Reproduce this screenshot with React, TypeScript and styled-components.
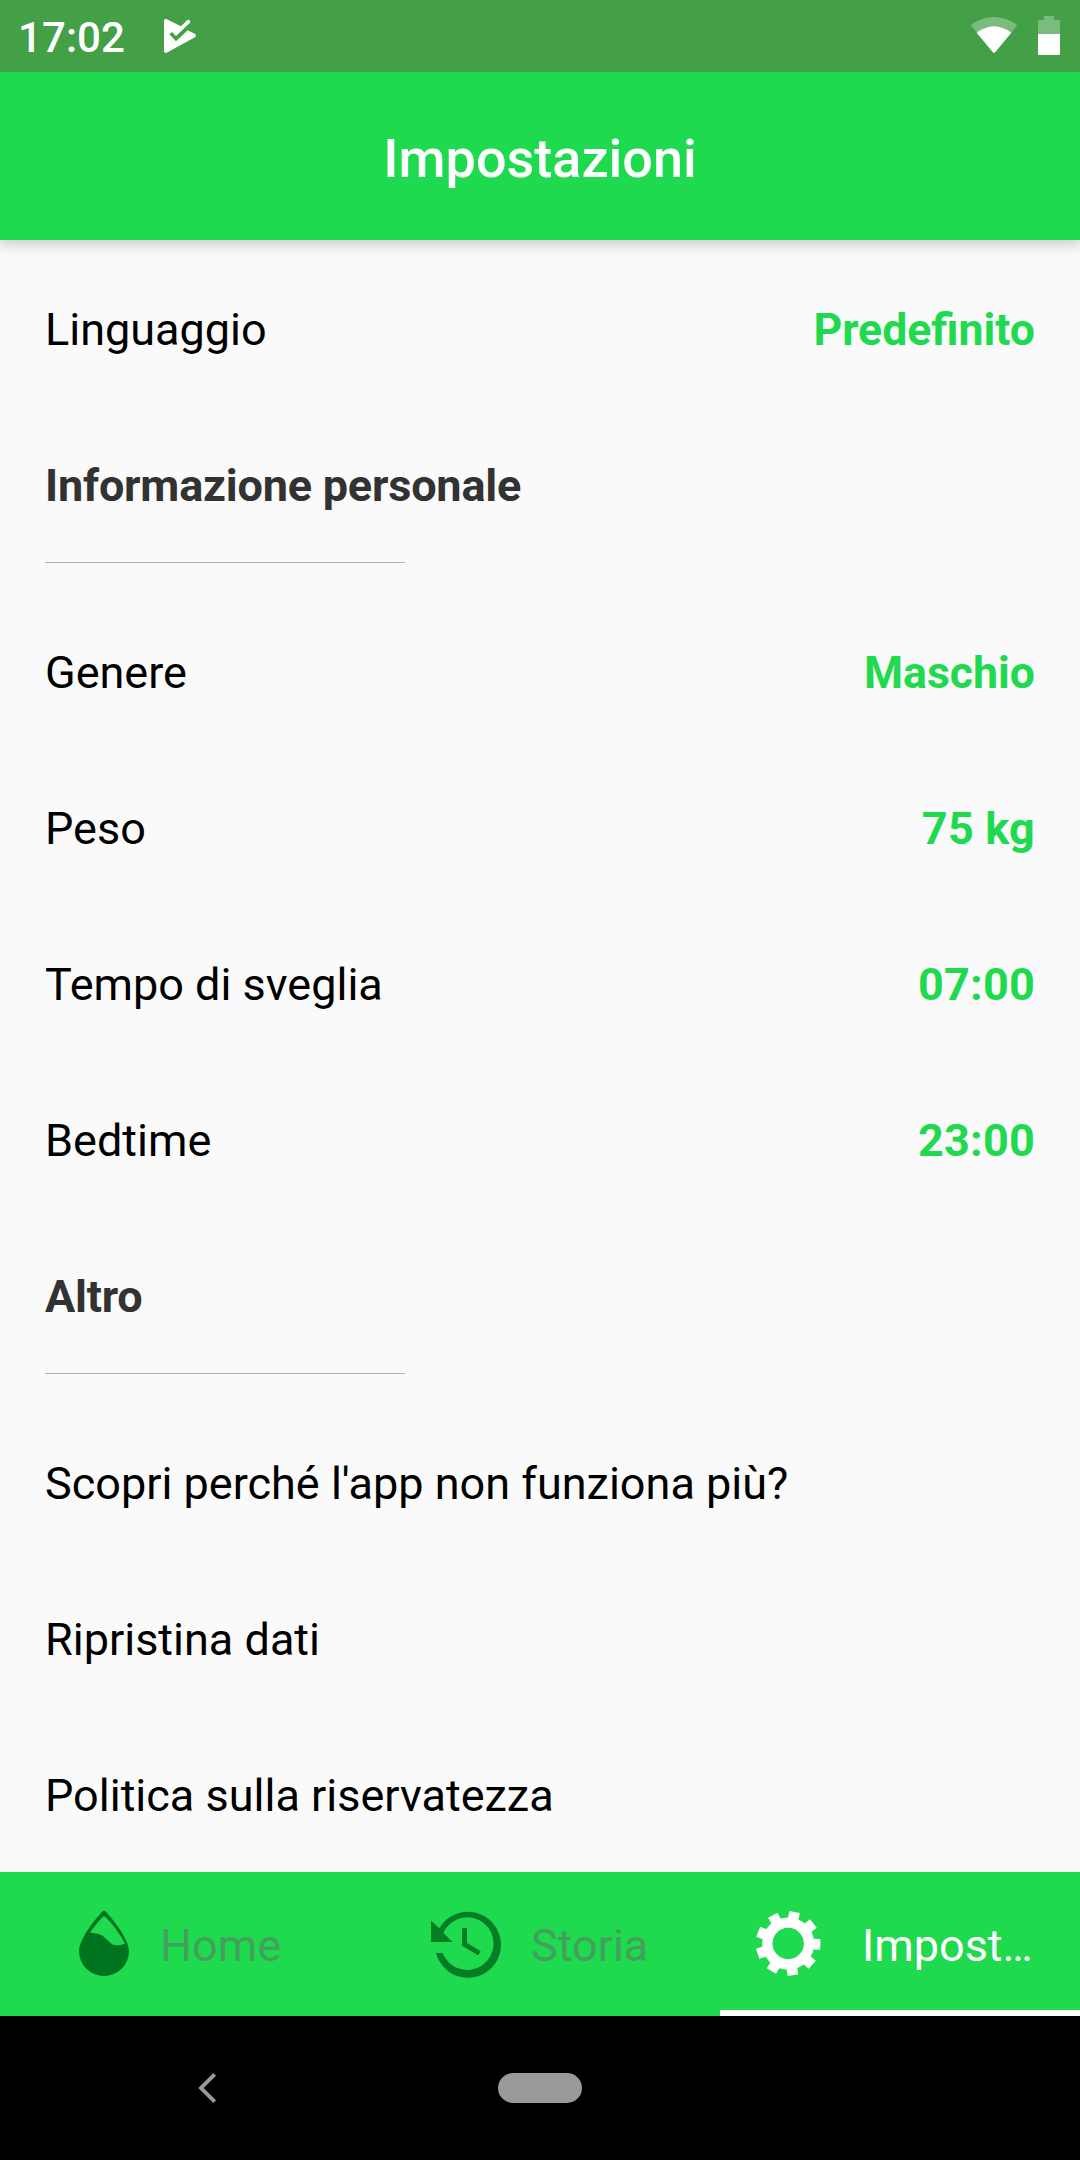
import React from "react";
import styled, { createGlobalStyle } from "styled-components";

const GREEN = "#1fd94f";

const GlobalStyle = createGlobalStyle`
  body { margin: 0; background: #fafafa; }
  * { box-sizing: border-box; }
`;

const Screen = styled.div`
  display: flex;
  flex-direction: column;
  width: 1080px;
  height: 2160px;
  overflow: hidden;
  background: #fafafa;
  color: #000;
  font-family: Roboto, "Noto Sans", sans-serif;
  font-size: 45px;
  line-height: 54px;
`;

const StatusBar = styled.div`
  position: relative;
  z-index: 1;
  display: flex;
  align-items: center;
  flex: none;
  height: 72px;
  padding: 0 20px 0 18px;
  background: #43a047;
`;

const Clock = styled.span`
  width: 145px;
  padding-top: 4px;
  color: #fff;
  font-size: 42px;
  font-weight: 500;
  letter-spacing: 0.1px;
`;

const StatusIcons = styled.div`
  display: flex;
  gap: 21px;
  margin-left: auto;
`;

const AppBar = styled.header`
  display: flex;
  align-items: center;
  justify-content: center;
  flex: none;
  height: 168px;
  padding-top: 5px;
  background: ${GREEN};
  box-shadow: 0 3px 12px 2px rgba(0, 0, 0, 0.18);
  color: #fff;
`;

const Title = styled.h1`
  margin: 0;
  font-size: 54px;
  font-weight: 500;
  line-height: 64px;
`;

const Content = styled.main`
  display: flex;
  flex-direction: column;
  flex: 1;
  min-height: 0;
  padding: 12px 45px 0;
`;

const Row = styled.div`
  display: flex;
  align-items: center;
  justify-content: space-between;
  flex: none;
  height: 156px;
`;

const Value = styled.span<{ $numeric: boolean }>`
  color: ${GREEN};
  font-size: ${(p) => (p.$numeric ? 45 : 44.6)}px;
  font-weight: 700;
  letter-spacing: ${(p) => (p.$numeric ? "0.2px" : "normal")};
`;

const SectionHeader = styled.div`
  flex: none;
  height: 187px;
  padding-top: 51px;
`;

const SectionTitle = styled.h2`
  margin: 0 0 49px;
  color: #323232;
  font-size: 45px;
  font-weight: 700;
  letter-spacing: -0.2px;
`;

const Divider = styled.div`
  width: 360px;
  height: 1px;
  background: #b2b2b2;
`;

const TabBar = styled.nav`
  display: grid;
  grid-template-columns: repeat(3, 1fr);
  flex: none;
  height: 144px;
  background: ${GREEN};
`;

const Tab = styled.div<{ $active?: boolean; $start: number; $gap: number }>`
  display: flex;
  align-items: center;
  gap: ${(p) => p.$gap}px;
  padding-left: ${(p) => p.$start}px;
  padding-top: ${(p) => (p.$active ? 6 : 0)}px;
  border-bottom: ${(p) => (p.$active ? "6px solid #fff" : "none")};
  color: ${(p) => (p.$active ? "#fff" : "#43a05c")};
`;

const TabLabel = styled.span`
  padding-top: 4px;
  white-space: nowrap;
`;

const SystemNav = styled.div`
  display: grid;
  grid-template-columns: 414px 252px 414px;
  align-items: center;
  justify-items: center;
  flex: none;
  height: 144px;
  background: #000;
`;

const HomePill = styled.div`
  width: 84px;
  height: 30px;
  border-radius: 15px;
  background: #999;
`;

const PlayCheckIcon = () => (
  <svg width="34" height="36" viewBox="489 54 102 108">
    <path
      fill="#fff"
      d="M499 57L543 79L562 60Q566 57 570 62Q572 65 570 68L528 108L516 96L508 103L528 124L563 91L586 102Q590 107 586 111L500 158Q492 160 492 153V62Q492 56 499 57Z"
    />
  </svg>
);

const WifiIcon = () => (
  <svg width="46" height="40" viewBox="211 48 138 120">
    <path
      fill="#fff"
      fillOpacity="0.3"
      d="M284 156Q280 161 276 156L214 80Q210 75 214 72Q280 30 346 72Q350 75 346 80Z"
    />
    <path fill="#fff" d="M284 156Q280 161 276 156L228 98Q280 59 332 98Z" />
  </svg>
);

const BatteryIcon = () => (
  <svg width="22" height="40" viewBox="414 48 66 120">
    <path fill="#fff" fillOpacity="0.3" d="M432 48H462V60H476Q480 60 480 64V102H414V64Q414 60 418 60H432Z" />
    <path fill="#fff" d="M414 102H480V161Q480 165 476 165H418Q414 165 414 161Z" />
  </svg>
);

const DropIcon = () => (
  <svg width="72" height="72" viewBox="204 144 216 216">
    <path
      fill="#00731f"
      fillRule="evenodd"
      d="M307 155Q312 150 317 155C340 178 387 238 387 274A75 74 0 0 1 237 274C237 238 284 178 307 155ZM308 171C295 184 280 202 270 218C298 219 309 226 322 240C337 256 345 260 375 251C365 230 336 188 316 171Q312 167 308 171Z"
    />
  </svg>
);

const HistoryIcon = () => (
  <svg width="72" height="72" viewBox="210 144 216 216">
    <path
      fill="#067d25"
      d="M213 182L238 205A99 99 0 1 1 228 279H248A79 79 0 1 0 250 218L277 246H213Z"
    />
    <path fill="#067d25" d="M306 204H321V249L362 274L355 286L306 257Z" />
  </svg>
);

const teeth = Array.from({ length: 9 }, (_, i) => 1.5 + i * 40);

const GearIcon = () => (
  <svg width="72" height="72" viewBox="96 144 216 216">
    <circle cx="204.5" cy="250.5" r="62.5" fill="none" stroke="#fff" strokeWidth="31" />
    {teeth.map((angle) => (
      <rect
        key={angle}
        x="272"
        y="234.5"
        width="29"
        height="32"
        fill="#fff"
        transform={`rotate(${angle} 204.5 250.5)`}
      />
    ))}
  </svg>
);

const BackIcon = () => (
  <svg width="24" height="36" viewBox="135 150 72 108">
    <path d="M194 163L153 204L194 245" fill="none" stroke="#999" strokeWidth="11.5" />
  </svg>
);

const personal = [
  ["Genere", "Maschio"],
  ["Peso", "75 kg"],
  ["Tempo di sveglia", "07:00"],
  ["Bedtime", "23:00"],
];

const other = ["Scopri perché l'app non funziona più?", "Ripristina dati", "Politica sulla riservatezza"];

const Setting = ({ label, value }: { label: string; value?: string }) => (
  <Row>
    <span>{label}</span>
    {value && <Value $numeric={/\d/.test(value)}>{value}</Value>}
  </Row>
);

const Section = ({ title }: { title: string }) => (
  <SectionHeader>
    <SectionTitle>{title}</SectionTitle>
    <Divider />
  </SectionHeader>
);

export default function App() {
  return (
    <>
      <GlobalStyle />
      <Screen>
        <StatusBar>
          <Clock>17:02</Clock>
          <PlayCheckIcon />
          <StatusIcons>
            <WifiIcon />
            <BatteryIcon />
          </StatusIcons>
        </StatusBar>
        <AppBar>
          <Title>Impostazioni</Title>
        </AppBar>
        <Content>
          <Setting label="Linguaggio" value="Predefinito" />
          <Section title="Informazione personale" />
          {personal.map(([label, value]) => (
            <Setting key={label} label={label} value={value} />
          ))}
          <Section title="Altro" />
          {other.map((label) => (
            <Setting key={label} label={label} />
          ))}
        </Content>
        <TabBar>
          <Tab $start={68} $gap={20}>
            <DropIcon />
            <TabLabel>Home</TabLabel>
          </Tab>
          <Tab $start={70} $gap={29}>
            <HistoryIcon />
            <TabLabel>Storia</TabLabel>
          </Tab>
          <Tab $active $start={32} $gap={38}>
            <GearIcon />
            <TabLabel>Impost…</TabLabel>
          </Tab>
        </TabBar>
        <SystemNav>
          <BackIcon />
          <HomePill />
        </SystemNav>
      </Screen>
    </>
  );
}
